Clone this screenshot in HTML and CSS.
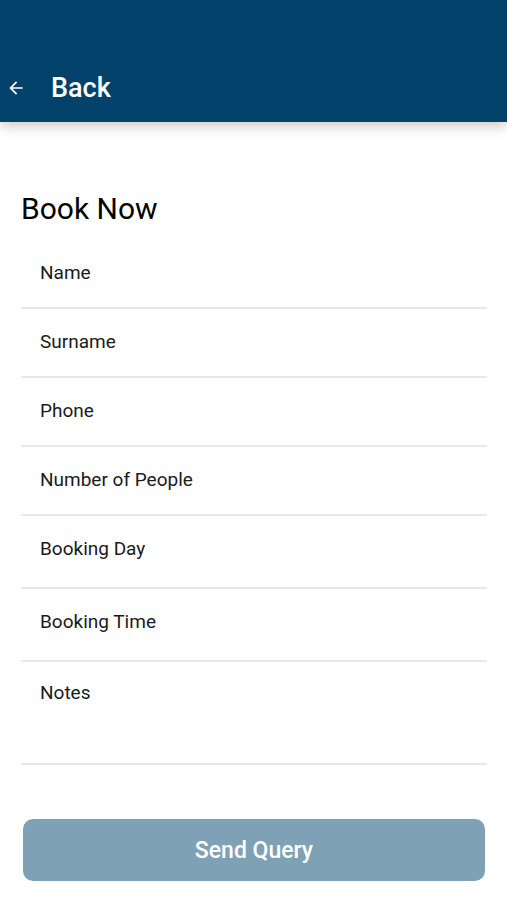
FILE: index.html
```html
<!DOCTYPE html>
<html lang="en">
<head>
    <meta charset="UTF-8">
    <meta name="viewport" content="width=device-width, initial-scale=1.0">
    <title>Book Now</title>
    <link rel="stylesheet" href="styles.css">
</head>
<body>
    <!-- Top bar -->
    <div class="top-bar">
        <button class="back-btn" aria-label="Back">
            <svg viewBox="0 0 24 24" width="20" height="20"><path d="M20 11H7.83l5.59-5.59L12 4l-8 8 8 8 1.41-1.41L7.83 13H20v-2z" fill="#fff"/></svg>
        </button>
        <span class="top-title">Back</span>
    </div>

    <div class="container">
        <h1>Book Now</h1>
        <form id="booking-form">
            <div class="field"><label>Name</label></div>
            <div class="field"><label>Surname</label></div>
            <div class="field"><label>Phone</label></div>
            <div class="field"><label>Number of People</label></div>
            <div class="field field-tall"><label>Booking Day</label></div>
            <div class="field field-tall"><label>Booking Time</label></div>
            <div class="field field-notes"><label>Notes</label></div>

            <button type="submit" class="send-btn">Send Query</button>
        </form>
    </div>
</body>
</html>
```

FILE: styles.css
```css
body {
    margin: 0;
    padding: 0;
    background: #fff;
    font-family: Roboto, "Liberation Sans", Arial, sans-serif;
    color: #111;
}

/* Top bar */
.top-bar {
    height: 122px;
    box-sizing: border-box;
    padding-top: 54px;
    background-color: #02426a;
    display: flex;
    align-items: center;
    box-shadow: 0 4px 12px rgba(0, 0, 0, 0.22);
}
.back-btn {
    background: none;
    border: none;
    padding: 0;
    margin-left: 6px;
    width: 20px;
    height: 20px;
    display: flex;
}
.top-title {
    color: #fff;
    font-size: 27px;
    font-weight: 500;
    margin-left: 25px;
}

.container {
    padding: 0 20px 0 21px;
}
h1 {
    font-size: 30px;
    font-weight: 400;
    line-height: 34px;
    margin: 70px 0 14px;
    color: #000;
}

/* Form rows */
.field {
    height: 69px;
    box-sizing: border-box;
    padding: 22px 0 0 19px;
    border-bottom: 2px solid #e8e8e8;
}
.field-tall {
    height: 73px;
}
.field-notes {
    height: 103px;
    padding-top: 20px;
}
.field label {
    display: block;
    font-size: 19px;
    line-height: 22px;
    color: #1a1a1a;
}

.send-btn {
    display: block;
    width: 462px;
    height: 62px;
    margin: 54px 0 0 2px;
    border: none;
    border-radius: 10px;
    background-color: #7fa1b5;
    color: #fff;
    font-family: Roboto, "Liberation Sans", Arial, sans-serif;
    font-size: 23px;
    font-weight: 500;
}
```
